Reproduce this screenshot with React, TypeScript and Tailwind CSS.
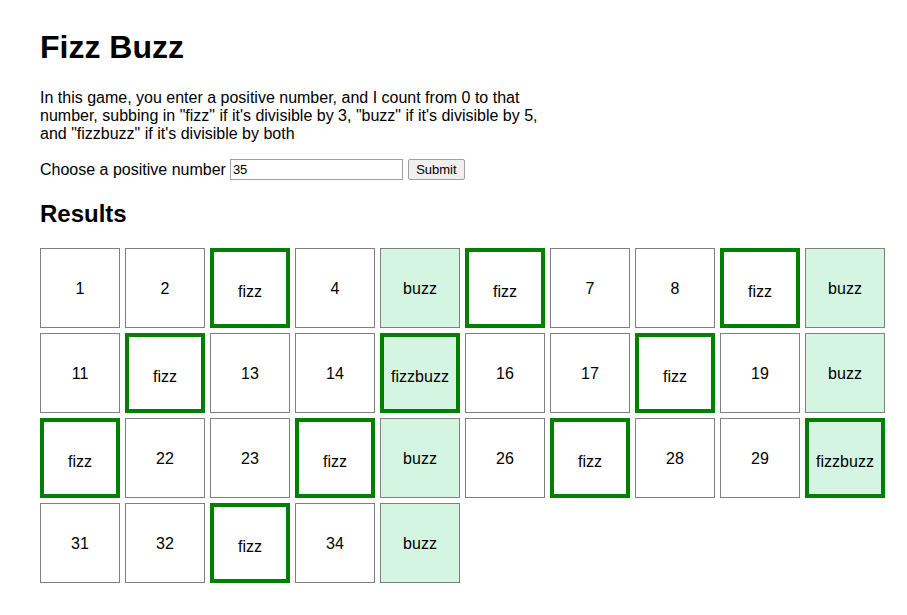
import React from "react";

type Kind = "num" | "fizz" | "buzz" | "fizzbuzz";

function classify(n: number): Kind {
    if (n % 15 === 0) return "fizzbuzz";
    if (n % 3 === 0) return "fizz";
    if (n % 5 === 0) return "buzz";
    return "num";
}

function Cell({n}: {n: number}) {
    const kind = classify(n);
    const styles: Record<Kind, string> = {
        num: "border border-[#808080] bg-white pt-[2px]",
        buzz: "border border-[#808080] bg-[#d5f5e3] pt-[2px]",
        fizz: "border-4 border-[#008000] bg-white pt-[8px]",
        fizzbuzz: "border-4 border-[#008000] bg-[#d5f5e3] pt-[8px]",
    };
    return (
        <div className={`w-[80px] h-[80px] box-border flex items-center justify-center text-[16px] text-black ${styles[kind]}`}>
            {kind === "num" ? n : kind}
        </div>
    );
}

export default function App() {
    const nums = Array.from({length: 35}, (_, i) => i + 1);

    return (
        <div className="min-h-[615px] bg-white pl-[40px] pt-[29px] font-['Liberation_Sans',Arial,sans-serif] text-black">
            <h1 className="text-[32px] font-bold leading-[37px] mb-[23px]">Fizz Buzz</h1>
            <p className="text-[16px] leading-[18px] max-w-[500px] mb-[16px]">
                In this game, you enter a positive number, and I count from 0 to that number, subbing in "fizz" if it's divisible by 3, "buzz" if it's divisible by 5, and "fizzbuzz" if it's divisible by both
            </p>
            <div className="flex items-center text-[16px] h-[21px]">
                <span>Choose a positive number</span>
                <input
                    defaultValue="35"
                    className="ml-[4px] w-[173px] h-[21px] border border-[#a0a0a0] px-[2px] text-[13px] outline-none"
                />
                <button className="ml-[5px] w-[57px] h-[21px] border border-[#a0a0a0] bg-[#efefef] rounded-[2px] text-[13px]">
                    Submit
                </button>
            </div>
            <h2 className="text-[24px] font-bold leading-[28px] mt-[20px] mb-[20px]">Results</h2>
            <div className="grid grid-cols-[repeat(10,80px)] gap-[5px]">
                {nums.map(n => <Cell key={n} n={n} />)}
            </div>
        </div>
    );
}
